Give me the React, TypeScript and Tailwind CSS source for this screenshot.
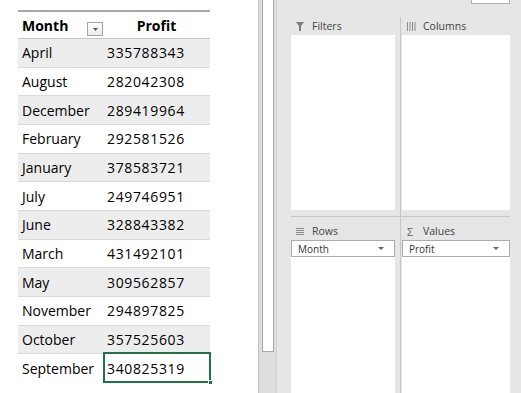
const rows: [string, string][] = [
  ['April', '335788343'],
  ['August', '282042308'],
  ['December', '289419964'],
  ['February', '292581526'],
  ['January', '378583721'],
  ['July', '249746951'],
  ['June', '328843382'],
  ['March', '431492101'],
  ['May', '309562857'],
  ['November', '294897825'],
  ['October', '357525603'],
  ['September', '340825319'],
]

function FilterIcon() {
  return (
    <svg width="8" height="9" viewBox="0 0 8 9">
      <path d="M0 0h8L5 4v5H3V4z" fill="#7b7b7b" />
    </svg>
  )
}

function ColumnsIcon() {
  return (
    <svg width="9" height="9" viewBox="0 0 9 9">
      <rect x="0" y="0" width="1" height="9" fill="#8a8a8a" />
      <rect x="2.5" y="0" width="1" height="9" fill="#8a8a8a" />
      <rect x="5" y="0" width="1" height="9" fill="#8a8a8a" />
      <rect x="7.5" y="0" width="1" height="9" fill="#8a8a8a" />
    </svg>
  )
}

function RowsIcon() {
  return (
    <svg width="8" height="7" viewBox="0 0 8 7">
      <rect x="0" y="0" width="8" height="1" fill="#8a8a8a" />
      <rect x="0" y="2" width="8" height="1" fill="#8a8a8a" />
      <rect x="0" y="4" width="8" height="1" fill="#8a8a8a" />
      <rect x="0" y="6" width="8" height="1" fill="#8a8a8a" />
    </svg>
  )
}

function Caret() {
  return (
    <svg width="6" height="3" viewBox="0 0 6 3">
      <path d="M0 0h6L3 3z" fill="#666" />
    </svg>
  )
}

function AreaHeader({ icon, label }: { icon: React.ReactNode; label: string }) {
  return (
    <div className="h-[18px] flex items-center shrink-0">
      <div className="w-[21px] pl-[5px] flex items-center">{icon}</div>
      <span className="text-[10.5px] text-[#444] leading-none">{label}</span>
    </div>
  )
}

function FieldDropdown({ label }: { label: string }) {
  return (
    <div className="h-[17px] border border-[#acacac] bg-white flex items-center justify-between pl-[6px] pr-[10px]">
      <span className="text-[10px] text-[#333] leading-none">{label}</span>
      <Caret />
    </div>
  )
}

export default function App() {
  return (
    <div className="flex w-[521px] h-[393px] overflow-hidden bg-white font-['Open_Sans',sans-serif]">
      {/* Sheet */}
      <div className="w-[258px] shrink-0 bg-white pl-[18px] pt-[10px]">
        <div className="w-[192px] text-[14px] text-black">
          {/* Header */}
          <div className="flex h-[29px] border-t-2 border-b border-t-[#a9a9a9] border-b-[#c4c4c4]">
            <div className="relative w-[85px] flex items-center pl-[4px] font-bold">
              Month
              <div className="absolute right-0 top-[10px] w-[16px] h-[14px] border border-[#a6a6a6] bg-gradient-to-b from-white to-[#ececec] flex items-center justify-center">
                <svg width="5" height="3" viewBox="0 0 5 3">
                  <path d="M0 0h5L2.5 3z" fill="#555" />
                </svg>
              </div>
            </div>
            <div className="flex-1 flex items-center justify-center font-bold">Profit</div>
          </div>

          {/* Rows */}
          {rows.map(([month, profit], i) => (
            <div
              key={month}
              className={`flex h-[28.67px] ${i === rows.length - 1 ? '' : 'border-b border-[#dadada]'} ${i % 2 === 0 ? 'bg-[#ededed]' : 'bg-white'}`}
            >
              <div className="w-[85px] flex items-center pl-[4px]">{month}</div>
              <div className="relative flex-1 flex items-center pl-[4px] tracking-[0.65px]">
                {profit}
                {i === rows.length - 1 && (
                  <>
                    <div className="absolute left-0 -top-[2px] -right-px bottom-0 border-2 border-[#217346]" />
                    <div className="absolute -right-[3px] -bottom-[2px] w-[5px] h-[5px] bg-[#217346] border border-white" />
                  </>
                )}
              </div>
            </div>
          ))}
        </div>
      </div>

      {/* Scrollbar */}
      <div className="w-[19px] shrink-0 h-full bg-[#dedede] border-l border-[#c4c4c4] border-r border-r-[#d0d0d0]">
        <div className="ml-[3px] w-[12px] h-[352px] bg-white border border-[#a8a8a8] border-t-0" />
      </div>

      {/* PivotTable field areas */}
      <div className="flex-1 bg-[#e6e6e6] pl-[14px] pr-[11px] flex flex-col">
        <div className="h-[4px] flex justify-end shrink-0">
          <div className="w-[39px] h-[4px] bg-white border border-t-0 border-[#adadad]" />
        </div>
        <div className="mt-[13px] flex-1 grid grid-cols-[104px_7px_108px] grid-rows-[193px_12px_1fr]">
          <div className="col-start-1 row-start-1 flex flex-col">
            <AreaHeader icon={<FilterIcon />} label="Filters" />
            <div className="flex-1 bg-white" />
          </div>
          <div className="col-start-2 row-start-1 row-span-3 pl-[5px]">
            <div className="w-px h-full bg-[#c6c6c6]" />
          </div>
          <div className="col-start-3 row-start-1 flex flex-col">
            <AreaHeader icon={<ColumnsIcon />} label="Columns" />
            <div className="flex-1 bg-white" />
          </div>
          <div className="col-start-1 col-span-3 row-start-2 pt-[6px]">
            <div className="h-px bg-[#c6c6c6]" />
          </div>
          <div className="col-start-1 row-start-3 flex flex-col">
            <AreaHeader icon={<RowsIcon />} label="Rows" />
            <div className="flex-1 bg-white">
              <FieldDropdown label="Month" />
            </div>
          </div>
          <div className="col-start-3 row-start-3 flex flex-col">
            <AreaHeader
              icon={<span className="text-[11px] leading-none text-[#666]">Σ</span>}
              label="Values"
            />
            <div className="flex-1 bg-white">
              <FieldDropdown label="Profit" />
            </div>
          </div>
        </div>
      </div>
    </div>
  )
}
